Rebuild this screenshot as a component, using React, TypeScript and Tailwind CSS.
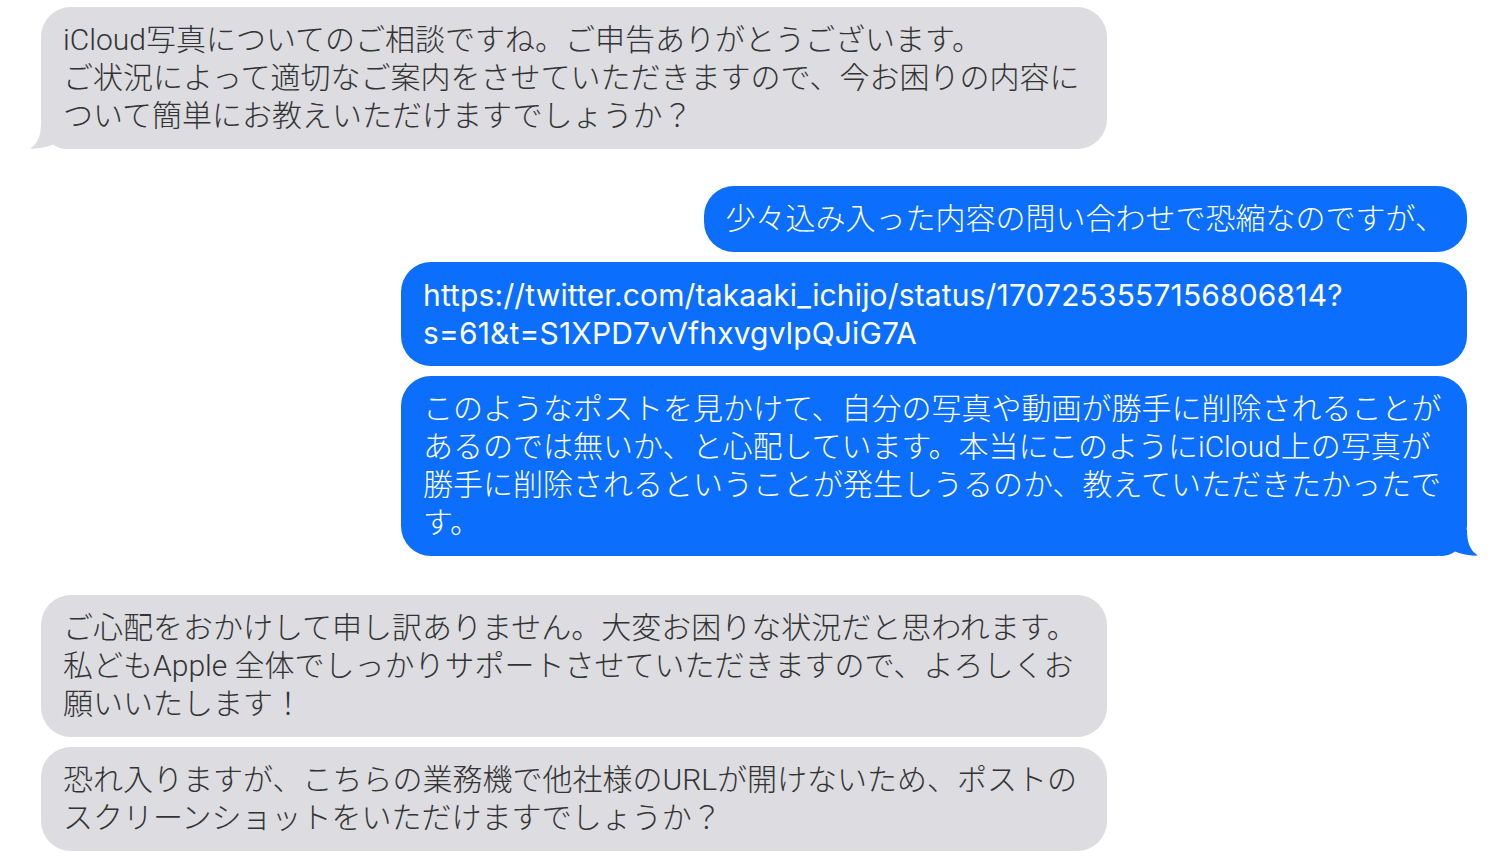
import React from "react";

const font = { fontFamily: "Roboto, 'Noto Sans CJK JP', sans-serif" };

function Tail({ side, color }: { side: "left" | "right"; color: string }) {
  // bubble tail drawn for the right side; mirrored for the left
  return (
    <svg
      width="40"
      height="26"
      viewBox="0 0 40 26"
      className={
        side === "right"
          ? "absolute bottom-0 right-[-13px]"
          : "absolute bottom-0 left-[-13px] -scale-x-100"
      }
    >
      <path d="M0 0 H27 C27 12 30 21 38 25.5 C32 26.2 22 24.5 15 21.5 C11 24.5 6 26 0 26 Z" fill={color} />
    </svg>
  );
}

function Bubble({
  lines,
  me,
  tail,
  full = true,
  latin,
}: {
  lines: string[];
  me?: boolean;
  tail?: boolean;
  full?: boolean;
  latin?: boolean;
}) {
  const bg = me ? "#0b6efd" : "#dcdce1";
  return (
    <div
      className={
        "relative rounded-[30px] px-[22px] pt-[14px] pb-[14px] text-[30px] leading-[38px] whitespace-nowrap " +
        (me ? "bg-[#0b6efd] text-white self-end " : "bg-[#dcdce1] text-[#333] self-start ") +
        (full ? "w-[1066px] " : "") +
        (latin ? "font-[Inter,sans-serif] font-normal tracking-[0.15px]" : "font-light")
      }
    >
      {lines.map((l, i) => (
        <div key={i}>{l}</div>
      ))}
      {tail && <Tail side={me ? "right" : "left"} color={bg} />}
    </div>
  );
}

export default function App() {
  return (
    <div className="w-[1500px] h-[858px] bg-white overflow-hidden pl-[41px] pr-[33px] pt-[7px]" style={font}>
      <div className="flex flex-col">
        <Bubble
          tail
          lines={[
            "iCloud写真についてのご相談ですね。ご申告ありがとうございます。",
            "ご状況によって適切なご案内をさせていただきますので、今お困りの内容に",
            "ついて簡単にお教えいただけますでしょうか？",
          ]}
        />
        <div className="h-[37px]" />
        <div className="flex flex-col gap-[10px]">
          <Bubble me full={false} lines={["少々込み入った内容の問い合わせで恐縮なのですが、"]} />
          <Bubble
            me
            latin
            lines={["https://twitter.com/takaaki_ichijo/status/1707253557156806814?", "s=61&t=S1XPD7vVfhxvgvlpQJiG7A"]}
          />
          <Bubble
            me
            tail
            lines={[
              "このようなポストを見かけて、自分の写真や動画が勝手に削除されることが",
              "あるのでは無いか、と心配しています。本当にこのようにiCloud上の写真が",
              "勝手に削除されるということが発生しうるのか、教えていただきたかったで",
              "す。",
            ]}
          />
        </div>
        <div className="h-[39px]" />
        <div className="flex flex-col gap-[10px]">
          <Bubble
            lines={[
              "ご心配をおかけして申し訳ありません。大変お困りな状況だと思われます。",
              "私どもApple 全体でしっかりサポートさせていただきますので、よろしくお",
              "願いいたします！",
            ]}
          />
          <Bubble
            lines={[
              "恐れ入りますが、こちらの業務機で他社様のURLが開けないため、ポストの",
              "スクリーンショットをいただけますでしょうか？",
            ]}
          />
        </div>
      </div>
    </div>
  );
}
